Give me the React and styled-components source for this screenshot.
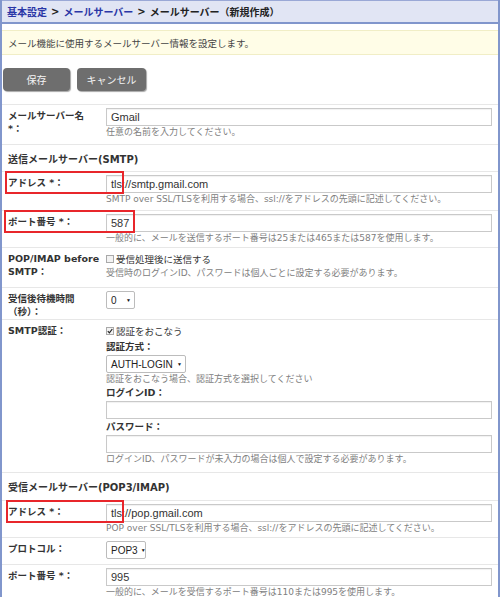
import styled, { createGlobalStyle } from 'styled-components'

const GlobalStyle = createGlobalStyle`
  body {
    margin: 0;
    background: #fff;
    font-family: "DejaVu Sans", "Noto Sans CJK JP", sans-serif;
    color: #333;
  }
`

const Page = styled.div`
  width: 500px;
  min-height: 597px;
  box-sizing: border-box;
  border-left: 2px solid #8196cc;
  border-right: 2px solid #8196cc;
  overflow: hidden;
`

const Header = styled.div`
  height: 24px;
  box-sizing: border-box;
  border-top: 1px solid #9aa8d6;
  border-bottom: 2px solid #8196cc;
  background: #e1e5f4;
  padding-left: 5px;
  display: flex;
  align-items: center;
  font-size: 10px;
  font-weight: bold;
  color: #222;
  white-space: nowrap;
`

const Crumb = styled.span`
  color: #2a36a6;
`

const Sep = styled.span`
  margin: 0 4px;
  color: #222;
`

const Notice = styled.div`
  margin-top: 6px;
  height: 25px;
  box-sizing: border-box;
  background: #fffde7;
  border-top: 1px solid #f1eec6;
  border-bottom: 1px solid #f1eec6;
  padding-left: 6px;
  display: flex;
  align-items: center;
  font-size: 9.5px;
  color: #444;
`

const Toolbar = styled.div`
  margin-top: 13px;
  padding-left: 1px;
  display: flex;
  gap: 7px;
`

const Button = styled.div`
  width: ${p => p.$w}px;
  height: 23px;
  box-sizing: border-box;
  background: #6e6e6e;
  border-radius: 4px;
  box-shadow: 1px 1px 1px rgba(0, 0, 0, 0.35);
  color: #f4f4f4;
  font-size: 10px;
  display: flex;
  align-items: center;
  justify-content: center;
`

const Form = styled.div`
  margin-top: 13px;
`

const Row = styled.div`
  position: relative;
  display: grid;
  grid-template-columns: 98px 1fr;
  align-items: start;
  min-height: ${p => p.$h}px;
  box-sizing: border-box;
  border-top: 1px solid #e7e7e7;
  padding: 3px 6px 0 6px;
`

const Label = styled.div`
  font-size: 9.5px;
  font-weight: bold;
  line-height: 13px;
  padding-top: 1px;
  color: #333;
`

const Field = styled.div`
  display: flex;
  flex-direction: column;
  align-items: flex-start;
  min-width: 0;
`

const Heading = styled.div`
  height: ${p => p.$h}px;
  box-sizing: border-box;
  border-top: 1px solid #e7e7e7;
  padding: 8px 6px 0;
  font-size: 10px;
  font-weight: bold;
  line-height: 14px;
  color: #333;
`

const Input = styled.div`
  width: 100%;
  height: 18px;
  box-sizing: border-box;
  border: 1px solid #c9c9c9;
  box-shadow: inset 0 1px 1px rgba(0, 0, 0, 0.06);
  background: #fff;
  padding-left: 4px;
  font-family: "Liberation Sans", Arial, sans-serif;
  font-size: 11px;
  line-height: 16px;
  color: #333;
`

const Help = styled.div`
  font-size: 9px;
  line-height: 12px;
  color: #808080;
  white-space: nowrap;
`

const SubLabel = styled.div`
  font-size: 9.5px;
  font-weight: bold;
  line-height: 16px;
  color: #333;
`

const CheckLine = styled.div`
  display: flex;
  align-items: center;
  gap: 2px;
  height: 16px;
  font-size: 9.5px;
  color: #333;
`

const Box = styled.span`
  width: 8px;
  height: 8px;
  box-sizing: border-box;
  border: 1px solid #a9a9a9;
  background: #f3f3f3;
  display: inline-flex;
  align-items: center;
  justify-content: center;
`

const Select = styled.div`
  width: ${p => p.$w}px;
  height: 18px;
  box-sizing: border-box;
  border: 1px solid #bcbcbc;
  border-radius: 2px;
  background: #fff;
  display: flex;
  align-items: center;
  justify-content: space-between;
  padding: 0 3px 0 4px;
  font-family: "Liberation Sans", Arial, sans-serif;
  font-size: 10px;
  color: #222;
  white-space: nowrap;
`

const Arrow = styled.span`
  font-size: 5px;
  margin-left: 3px;
  color: #111;
`

const Mark = styled.div`
  position: absolute;
  top: ${p => p.$top}px;
  left: ${p => p.$left}px;
  width: ${p => p.$w}px;
  height: 23px;
  box-sizing: border-box;
  border: 2px solid #e8262b;
  pointer-events: none;
`

function Checkbox({ checked, children }) {
  return (
    <CheckLine>
      <Box>
        {checked && (
          <svg width="6" height="6" viewBox="0 0 6 6">
            <path d="M0.8 3.2 L2.4 4.8 L5.3 1" fill="none" stroke="#222" strokeWidth="1.2" />
          </svg>
        )}
      </Box>
      {children}
    </CheckLine>
  )
}

function DropDown({ width, value }) {
  return (
    <Select $w={width}>
      <span>{value}</span>
      <Arrow>▼</Arrow>
    </Select>
  )
}

export default function App() {
  return (
    <>
      <GlobalStyle />
      <Page>
        <Header>
          <Crumb>基本設定</Crumb>
          <Sep>&gt;</Sep>
          <Crumb>メールサーバー</Crumb>
          <Sep>&gt;</Sep>
          <span>メールサーバー（新規作成）</span>
        </Header>

        <Notice>メール機能に使用するメールサーバー情報を設定します。</Notice>

        <Toolbar>
          <Button $w={67}>保存</Button>
          <Button $w={69}>キャンセル</Button>
        </Toolbar>

        <Form>
          <Row $h={40}>
            <Label>メールサーバー名<br />*：</Label>
            <Field>
              <Input>Gmail</Input>
              <Help>任意の名前を入力してください。</Help>
            </Field>
          </Row>

          <Heading $h={27}>送信メールサーバー(SMTP)</Heading>

          <Row $h={39}>
            <Mark $top={-1} $left={3} $w={119} />
            <Label>アドレス *：</Label>
            <Field>
              <Input>tls://smtp.gmail.com</Input>
              <Help>SMTP over SSL/TLSを利用する場合、ssl://をアドレスの先頭に記述してください。</Help>
            </Field>
          </Row>

          <Row $h={37}>
            <Mark $top={-1} $left={2} $w={131} />
            <Label>ポート番号 *：</Label>
            <Field>
              <Input>587</Input>
              <Help>一般的に、メールを送信するポート番号は25または465または587を使用します。</Help>
            </Field>
          </Row>

          <Row $h={40}>
            <Label>POP/IMAP before<br />SMTP：</Label>
            <Field>
              <Checkbox>受信処理後に送信する</Checkbox>
              <Help>受信時のログインID、パスワードは個人ごとに設定する必要があります。</Help>
            </Field>
          </Row>

          <Row $h={32}>
            <Label>受信後待機時間<br />（秒）：</Label>
            <Field>
              <DropDown width={29} value="0" />
            </Field>
          </Row>

          <Row $h={153}>
            <Label>SMTP認証：</Label>
            <Field>
              <Checkbox checked>認証をおこなう</Checkbox>
              <SubLabel>認証方式：</SubLabel>
              <DropDown width={80} value="AUTH-LOGIN" />
              <Help>認証をおこなう場合、認証方式を選択してください</Help>
              <SubLabel>ログインID：</SubLabel>
              <Input />
              <SubLabel>パスワード：</SubLabel>
              <Input />
              <Help>ログインID、パスワードが未入力の場合は個人で設定する必要があります。</Help>
            </Field>
          </Row>

          <Heading $h={28}>受信メールサーバー(POP3/IMAP)</Heading>

          <Row $h={37}>
            <Mark $top={-1} $left={4} $w={118} />
            <Label>アドレス *：</Label>
            <Field>
              <Input>tls://pop.gmail.com</Input>
              <Help>POP over SSL/TLSを利用する場合、ssl://をアドレスの先頭に記述してください。</Help>
            </Field>
          </Row>

          <Row $h={27}>
            <Label>プロトコル：</Label>
            <Field>
              <DropDown width={40} value="POP3" />
            </Field>
          </Row>

          <Row $h={37}>
            <Label>ポート番号 *：</Label>
            <Field>
              <Input>995</Input>
              <Help>一般的に、メールを受信するポート番号は110または995を使用します。</Help>
            </Field>
          </Row>
        </Form>
      </Page>
    </>
  )
}
